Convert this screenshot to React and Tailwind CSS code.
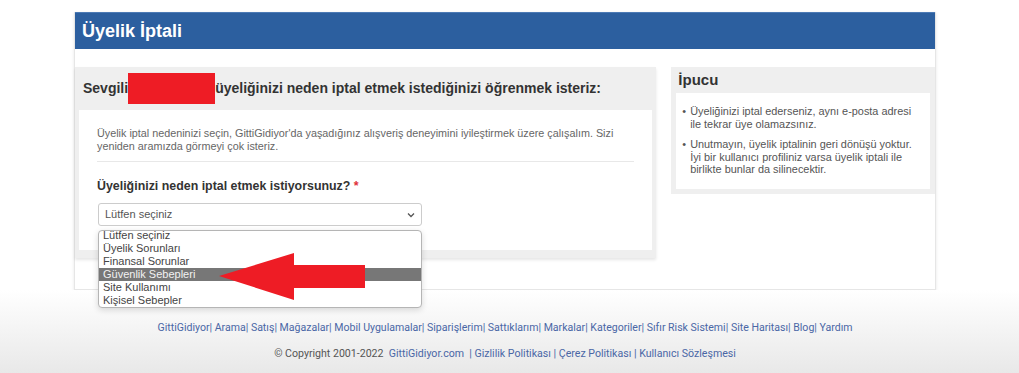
export default function App() {
  const options = [
    "Lütfen seçiniz",
    "Üyelik Sorunları",
    "Finansal Sorunlar",
    "Güvenlik Sebepleri",
    "Site Kullanımı",
    "Kişisel Sebepler",
  ];
  const links = [
    "GittiGidiyor",
    "Arama",
    "Satış",
    "Mağazalar",
    "Mobil Uygulamalar",
    "Siparişlerim",
    "Sattıklarım",
    "Markalar",
    "Kategoriler",
    "Sıfır Risk Sistemi",
    "Site Haritası",
    "Blog",
    "Yardım",
  ];
  return (
    <div className="relative w-[1019px] h-[373px] overflow-hidden bg-white font-['Liberation_Sans',Arial,sans-serif]">
      <div className="pt-[12px]">
        {/* main card */}
        <div className="ml-[74px] w-[862px] bg-white border-x border-b border-[#e6e6e6] shadow-[0_1px_3px_rgba(0,0,0,0.10)]">
          <div className="h-[37px] bg-[#2c5f9f] border-t border-[#4c7ab5] flex items-center pl-[7px] text-white font-bold text-[18px]">
            Üyelik İptali
          </div>
          <div className="pt-[18px] pb-[31px] flex gap-[15px]">
            {/* main panel */}
            <div className="w-[582px] bg-[#efefef] px-[4px] pb-[8px] shadow-[0_2px_3px_rgba(0,0,0,0.10)]">
              <div className="h-[43px] flex items-center pl-[4px] text-[14px] font-bold text-[#333] whitespace-nowrap">
                <span>Sevgili</span>
                <span className="w-[87px] h-[31px] bg-[#ee1c25]"></span>
                <span>üyeliğinizi neden iptal etmek istediğinizi öğrenmek isteriz:</span>
              </div>
              <div className="bg-white px-[18px] pt-[17px] pb-[24px]">
                <p className="text-[10.8px] leading-[13px] text-[#666] whitespace-nowrap">
                  Üyelik iptal nedeninizi seçin, GittiGidiyor'da yaşadığınız alışveriş deneyimini iyileştirmek üzere çalışalım. Sizi
                  <br />
                  yeniden aramızda görmeyi çok isteriz.
                </p>
                <div className="mt-[8px] border-t border-[#e8e8e8]"></div>
                <div className="mt-[16px] text-[12.4px] leading-[16px] font-bold text-[#333]">
                  Üyeliğinizi neden iptal etmek istiyorsunuz? <span className="text-[#e0313b]">*</span>
                </div>
                <div className="relative mt-[9px] ml-[1px] w-[324px]">
                  <div className="h-[23px] border border-[#cccccc] rounded-[3px] flex items-center justify-between pl-[6px] pr-[5px] text-[11px] text-[#555]">
                    <span>Lütfen seçiniz</span>
                    <svg width="10" height="10" viewBox="0 0 10 10">
                      <path d="M2 3.5 L5 6.5 L8 3.5" fill="none" stroke="#555" strokeWidth="1.3" />
                    </svg>
                  </div>
                  <div className="absolute left-0 top-full mt-[4px] w-[324px] h-[78px] overflow-hidden bg-white border border-[#b5b5b5] rounded-[4px] shadow-[0_2px_6px_rgba(0,0,0,0.15)] z-10">
                    <div className="mt-[-2px]">
                      {options.map((o, i) => (
                        <div
                          key={o}
                          className={
                            "h-[13px] leading-[13px] text-[11px] px-[4px] " +
                            (i === 3 ? "bg-[#777777] text-[#f2f2f2]" : "text-[#444]")
                          }
                        >
                          {o}
                        </div>
                      ))}
                    </div>
                  </div>
                </div>
              </div>
            </div>
            {/* tip panel */}
            <div className="w-[264px] self-start bg-[#efefef] px-[5px] pb-[5px]">
              <div className="h-[26px] flex items-center pl-[2px] text-[15px] font-bold text-[#333]">İpucu</div>
              <div className="bg-white pt-[12px] pb-[13px] pl-[6px] text-[10.9px] leading-[12.5px] text-[#555]">
                <div className="flex gap-[4px] whitespace-nowrap">
                  <span>•</span>
                  <span>
                    Üyeliğinizi iptal ederseniz, aynı e-posta adresi
                    <br />
                    ile tekrar üye olamazsınız.
                  </span>
                </div>
                <div className="flex gap-[4px] mt-[8px] whitespace-nowrap">
                  <span>•</span>
                  <span>
                    Unutmayın, üyelik iptalinin geri dönüşü yoktur.
                    <br />
                    İyi bir kullanıcı profiliniz varsa üyelik iptali ile
                    <br />
                    birlikte bunlar da silinecektir.
                  </span>
                </div>
              </div>
            </div>
          </div>
        </div>
      </div>

      {/* footer */}
      <div className="h-[84px] bg-gradient-to-b from-white to-[#e8e8e8] font-['Roboto',sans-serif]">
        <div className="ml-[74px] w-[862px] pt-[31px] text-center text-[10.55px] text-[#4a67a6] leading-[13px] whitespace-nowrap">
          {links.map((l, i) => (
            <span key={l}>
              {l}
              {i < links.length - 1 ? "| " : ""}
            </span>
          ))}
        </div>
        <div className="ml-[74px] w-[862px] mt-[13px] text-center text-[10.6px] leading-[13px] whitespace-pre">
          <span className="text-[#555]">© Copyright 2001-2022  </span>
          <span className="text-[#4a67a6]">GittiGidiyor.com  | Gizlilik Politikası | Çerez Politikası | Kullanıcı Sözleşmesi</span>
        </div>
      </div>

      {/* red arrow overlay */}
      <svg className="absolute left-0 top-0 z-20 pointer-events-none" width="1019" height="373">
        <polygon points="219,276 294,253 294,265 365,265 365,288 294,288 294,300" fill="#ee1c25" />
      </svg>
    </div>
  );
}
